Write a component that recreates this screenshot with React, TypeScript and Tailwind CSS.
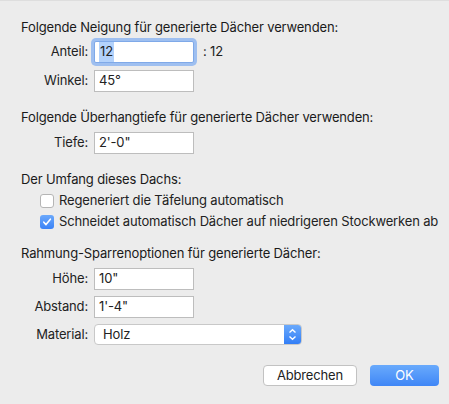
import React from 'react';

const font = { fontFamily: '"Inter", "Liberation Sans", sans-serif' };

function Field({ label, value, selected }: { label: string; value: string; selected?: boolean }) {
  return (
    <div className="flex items-center">
      <div className="w-[67px] text-right text-[13px] text-[#222]">{label}</div>
      <div
        className={`ml-[6px] h-[22px] w-[100px] bg-white border flex items-center pl-[4px] text-[13px] text-[#222] ${
          selected ? 'border-[#7fa9e8] ring-[3px] ring-[#9ebff0] rounded-[2px]' : 'border-[#bdbdbd]'
        }`}
      >
        {selected ? <span className="bg-[#b3d2fb] px-[1px]">{value}</span> : value}
      </div>
    </div>
  );
}

function Check({ label, checked }: { label: string; checked?: boolean }) {
  return (
    <div className="flex items-center h-[18px] pl-[19px]">
      {checked ? (
        <div className="w-[14px] h-[14px] rounded-[3px] bg-gradient-to-b from-[#6ba8fb] to-[#3a82f6] flex items-center justify-center">
          <svg width="10" height="10" viewBox="0 0 10 10">
            <path d="M1.8 5.2 L4 7.6 L8.4 2.2" fill="none" stroke="white" strokeWidth="1.6" strokeLinecap="round" strokeLinejoin="round" />
          </svg>
        </div>
      ) : (
        <div className="w-[14px] h-[14px] rounded-[3px] bg-white border border-[#b5b5b5]" />
      )}
      <span className="ml-[5px] text-[13px] text-[#222] whitespace-nowrap">{label}</span>
    </div>
  );
}

export default function App() {
  return (
    <div className="w-[449px] h-[404px] bg-[#ececec] border-t border-[#dedede] flex flex-col pl-[21px] pt-[18px] tracking-[-0.15px] overflow-hidden" style={font}>
      <div className="text-[13px] leading-4 text-[#1a1a1a]">Folgende Neigung für generierte Dächer verwenden:</div>
      <div className="mt-[6px] flex items-center">
        <Field label="Anteil:" value="12" selected />
        <span className="ml-[9px] text-[13px] text-[#222]">: 12</span>
      </div>
      <div className="mt-[7px]">
        <Field label="Winkel:" value="45°" />
      </div>

      <div className="mt-[17px] text-[13px] leading-4 text-[#1a1a1a]">Folgende Überhangtiefe für generierte Dächer verwenden:</div>
      <div className="mt-[7px]">
        <Field label="Tiefe:" value={"2'-0\""} />
      </div>

      <div className="mt-[17px] text-[13px] leading-4 text-[#1a1a1a]">Der Umfang dieses Dachs:</div>
      <div className="mt-[5px]">
        <Check label="Regeneriert die Täfelung automatisch" />
      </div>
      <div className="mt-[3px]">
        <Check label="Schneidet automatisch Dächer auf niedrigeren Stockwerken ab" checked />
      </div>

      <div className="mt-[14px] text-[13px] leading-4 text-[#1a1a1a]">Rahmung-Sparrenoptionen für generierte Dächer:</div>
      <div className="mt-[7px]">
        <Field label="Höhe:" value={'10"'} />
      </div>
      <div className="mt-[6px]">
        <Field label="Abstand:" value={"1'-4\""} />
      </div>
      <div className="mt-[6px] flex items-center">
        <div className="w-[67px] text-right text-[13px] text-[#222]">Material:</div>
        <div className="ml-[6px] h-[21px] w-[208px] bg-white border border-[#c8c8c8] rounded-[4px] flex items-center overflow-hidden">
          <span className="flex-1 pl-[8px] text-[13px] text-[#222]">Holz</span>
          <div className="w-[17px] h-full bg-gradient-to-b from-[#6aa9fb] to-[#327ef6] flex items-center justify-center">
            <svg width="9" height="13" viewBox="0 0 9 13">
              <path d="M1.5 4.5 L4.5 1.8 L7.5 4.5 M1.5 8.5 L4.5 11.2 L7.5 8.5" fill="none" stroke="white" strokeWidth="1.4" />
            </svg>
          </div>
        </div>
      </div>

      <div className="mt-[20px] flex justify-end pr-[10px] gap-[13px]">
        <div className="w-[94px] h-[21px] bg-white border border-[#c2c2c2] rounded-[4px] flex items-center justify-center text-[13px] text-[#222]">
          Abbrechen
        </div>
        <div className="w-[69px] h-[21px] rounded-[4px] bg-gradient-to-b from-[#69aafc] to-[#3f86f6] flex items-center justify-center text-[13px] text-white">
          OK
        </div>
      </div>
    </div>
  );
}
